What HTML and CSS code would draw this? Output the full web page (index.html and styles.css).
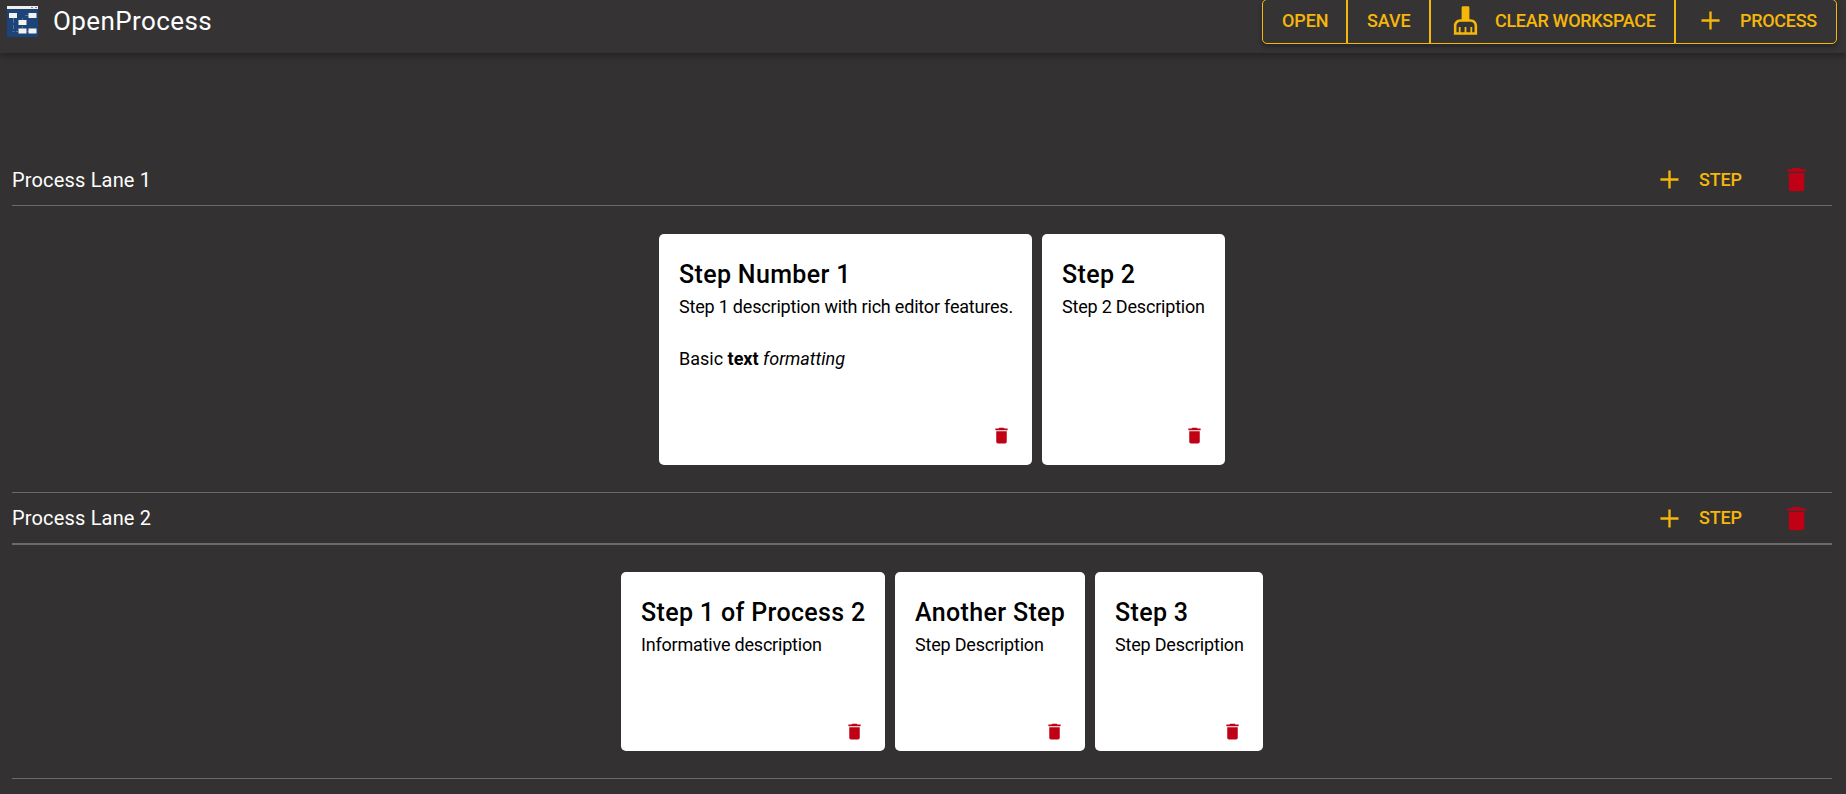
FILE: index.html
```html
<!DOCTYPE html>
<html lang="en">
<head>
<meta charset="utf-8">
<title>OpenProcess</title>
<link rel="stylesheet" href="styles.css">
</head>
<body>
<svg class="defs" width="0" height="0">
  <symbol id="trash" viewBox="0 0 24 24"><path d="M19 4h-3.5l-1-1h-5l-1 1H5v2h14M6 19a2 2 0 0 0 2 2h8a2 2 0 0 0 2-2V7H6v12z"/></symbol>
  <symbol id="plus" viewBox="0 0 24 24"><path d="M19 12.9h-6.100V19h-1.800v-6.100H5v-1.800h6.100V5h1.800v6.100H19z"/></symbol>
  <symbol id="broom" viewBox="0 0 24 24"><path d="M16 11h-1V2a1 1 0 0 0-1-1h-4a1 1 0 0 0-1 1v9H8c-2.760 0-5 2.240-5 5v7h18v-7c0-2.760-2.240-5-5-5zm3 10h-1.800v-4h-1.400v4h-3.100v-4h-1.400v4H8.200v-4H6.800v4H5v-5c0-1.650 1.350-3 3-3h8c1.650 0 3 1.350 3 3v5z"/></symbol>
</svg>
<header class="toolbar">
  <svg class="logo" viewBox="0 0 31 31">
    <rect width="31" height="31" fill="#1d4479"/>
    <rect width="31" height="3" fill="#f1eeee"/>
    <path d="M24 1.500h2M28 1.500h2" stroke="#9a8480"/>
    <path d="M6.500 12v5M6.500 19v4M5.500 25.500h2M9 25.500h2M18 9.500h4M15.500 12v2M15.500 20v2M20 25.500h2" fill="none" stroke="#55749f"/>
    <g fill="#f4f2ec"><rect x="2" y="7" width="8" height="5"/><rect x="21.500" y="7" width="8" height="5"/><rect x="11.500" y="14" width="8" height="5"/><rect x="11.500" y="22.500" width="8" height="5"/><rect x="21.500" y="22.500" width="8" height="5"/></g>
  </svg>
  <h1 class="brand">OpenProcess</h1>
  <nav class="actions">
    <button class="action open">OPEN</button>
    <button class="action save">SAVE</button>
    <button class="action clear"><svg class="broom"><use href="#broom"/></svg><span>CLEAR WORKSPACE</span></button>
    <button class="action process"><svg class="plus"><use href="#plus"/></svg><span>PROCESS</span></button>
  </nav>
</header>
<main class="lanes">
  <section class="lane">
    <div class="lane-head">
      <h2 class="lane-name">Process Lane 1</h2>
      <button class="add-step"><svg class="plus"><use href="#plus"/></svg><span>STEP</span></button>
      <button class="remove-lane"><svg><use href="#trash"/></svg></button>
    </div>
    <div class="steps tall">
      <article class="card w1"><h3>Step Number 1</h3><p>Step 1 description with rich editor features.</p><p class="gap">Basic <b>text</b> <i>formatting</i></p><svg class="trash"><use href="#trash"/></svg></article>
      <article class="card w2"><h3>Step 2</h3><p>Step 2 Description</p><svg class="trash"><use href="#trash"/></svg></article>
    </div>
  </section>
  <section class="lane second">
    <div class="lane-head">
      <h2 class="lane-name">Process Lane 2</h2>
      <button class="add-step"><svg class="plus"><use href="#plus"/></svg><span>STEP</span></button>
      <button class="remove-lane"><svg><use href="#trash"/></svg></button>
    </div>
    <div class="steps">
      <article class="card w3"><h3>Step 1 of Process 2</h3><p>Informative description</p><svg class="trash"><use href="#trash"/></svg></article>
      <article class="card w4"><h3>Another Step</h3><p>Step Description</p><svg class="trash"><use href="#trash"/></svg></article>
      <article class="card w5"><h3>Step 3</h3><p>Step Description</p><svg class="trash"><use href="#trash"/></svg></article>
    </div>
  </section>
</main>
</body>
</html>
```
FILE: styles.css
```css
* { box-sizing: border-box; }
body { margin: 0; height: 794px; overflow: hidden; background: #343132; font-family: Roboto, sans-serif; color: #fff; }
h1, h2, h3, p { margin: 0; font-weight: 400; white-space: nowrap; }
svg { display: block; flex: none; fill: currentColor; }
.defs { position: absolute; }
button { background: none; border: 0; padding: 0; margin: 0; color: #f5b70a; font: 500 18px/26px Roboto, sans-serif; display: flex; align-items: center; white-space: nowrap; }

.toolbar { height: 53px; display: flex; align-items: flex-start; background: #353334; padding: 0 9px 0 7px; box-shadow: 0 3px 6px rgba(0,0,0,.3); }
.logo { width: 31px; height: 31px; margin: 6px 15px 0 0; }
.brand { font-size: 26px; line-height: 32px; margin-top: 5px; letter-spacing: .4px; }
.actions { margin: -1px 0 0 auto; display: flex; height: 45px; border-radius: 5px; box-shadow: 0 3px 5px rgba(0,0,0,.3); }
.action { border: 1px solid #f5b70a; height: 45px; padding: 0 0 2px 19px; letter-spacing: -.1px; }
.action:first-child { border-radius: 5px 0 0 5px; }
.action:last-child { border-radius: 0 5px 5px 0; }
.open { width: 85px; }
.save { width: 83px; }
.clear { width: 245px; gap: 14px; letter-spacing: -.3px; }
.process { width: 162px; gap: 14px; letter-spacing: -.3px; }
.broom { width: 31px; height: 31px; }
.plus { width: 31px; height: 31px; }

.lanes { padding: 101px 14px 0 12px; }
.lane { height: 338px; }
.lane-head { height: 52px; display: flex; align-items: center; border-bottom: 1px solid #6c6a6b; }
.lane-name { font-size: 20px; line-height: 28px; margin-right: auto; letter-spacing: .17px; }
.add-step { gap: 14px; margin-right: 39px; letter-spacing: -.1px; }
.remove-lane { color: #c00014; margin-right: 20px; }
.remove-lane svg { width: 31px; height: 31px; }
.second { height: 287px; border-top: 1px solid #6c6a6b; border-bottom: 1px solid #6c6a6b; }
.second .lane-head { height: 52px; border-bottom-width: 2px; }

.steps { display: flex; justify-content: center; gap: 10px; margin: 27px 0 0 40px; height: 179px; }
.tall { margin-top: 28px; height: 231px; }
.card { background: #fff; color: #000; border-radius: 5px; padding: 23px 24px 9px 20px; display: flex; flex-direction: column; }
.tall .card { padding-bottom: 19px; }
.card h3 { font-size: 25px; line-height: 36px; margin-bottom: 1px; font-weight: 500; letter-spacing: .35px; }
.card p { font-size: 18px; line-height: 26px; letter-spacing: -.2px; }
.card .gap { margin-top: 26px; letter-spacing: 0; }
.trash { width: 21px; height: 21px; margin: auto -4px 0 auto; color: #c00014; }
.w1 { width: 373px; } .w2 { width: 183px; } .w3 { width: 264px; } .w4 { width: 190px; } .w5 { width: 168px; }
```
